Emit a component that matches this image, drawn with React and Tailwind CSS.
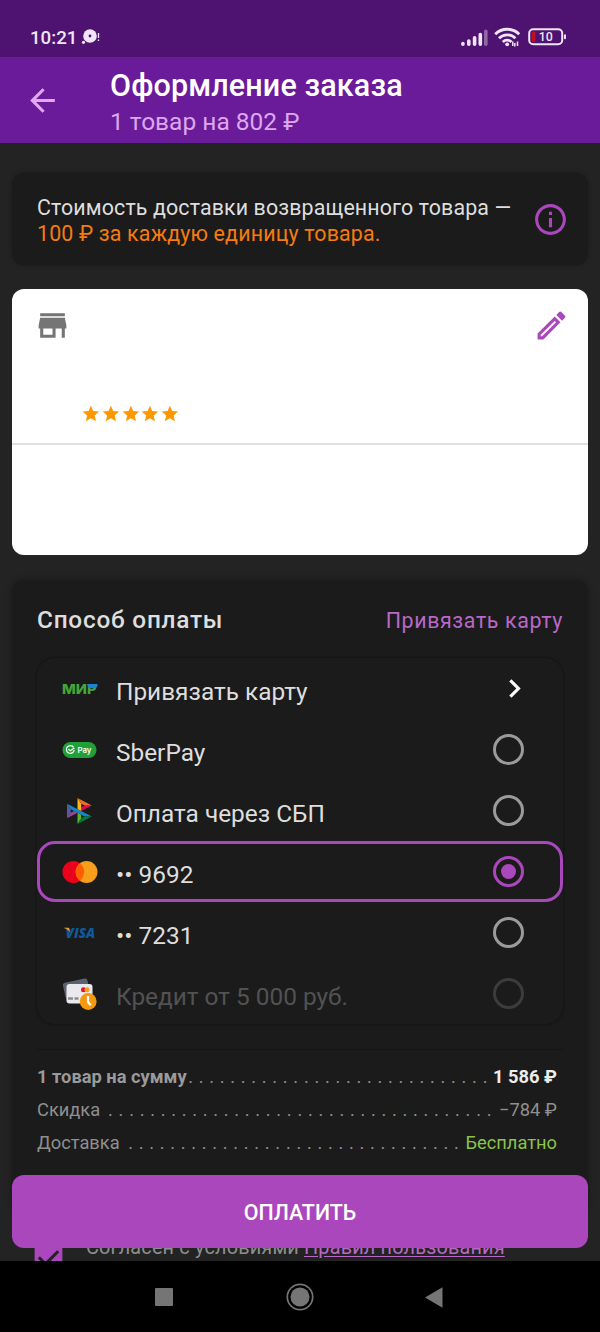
import { MdArrowBack, MdCheckBox, MdChevronRight, MdInfoOutline, MdOutlineModeEdit, MdStar, MdStore } from "react-icons/md";

const MirLogo = () => (
  <svg className="w-[36px] h-[22px]" viewBox="0 -5 36 22">
    <text x="0" y="10.6" textLength="34.5" lengthAdjust="spacingAndGlyphs" fontFamily="Inter, Roboto, sans-serif" fontWeight="800" fontSize="13" fill="#43a638">
      МИР
    </text>
    <path d="M25.2 1h10.4c.2 2.2-.8 3.8-2.6 4.2h-4.600c-1.700 0-2.800-1.800-3.200-4.200z" fill="#1c84cf" />
  </svg>
);

const SberPayLogo = () => (
  <svg className="w-[36px] h-[18px]" viewBox="0 0 36 18">
    <rect x="0.5" y="1" width="34" height="16" rx="8" fill="#21a038" />
    <path d="M11.6 6.3A3.9 3.9 0 1 0 12.2 9" fill="none" stroke="#fff" strokeWidth="1.2" />
    <path d="M6.3 8.2l2.1 1.5 4-2.7" fill="none" stroke="#fff" strokeWidth="1.2" />
    <text x="15.4" y="11.7" fontFamily="Inter, Roboto, sans-serif" fontWeight="600" fontSize="7.8" textLength="14" fill="#fff">
      Pay
    </text>
  </svg>
);

const SbpLogo = () => (
  <svg className="w-[25px] h-[26px] ml-[5px]" viewBox="0 0 98 120" preserveAspectRatio="none">
    <path d="M0 26.12l14.532 25.975v15.844L.017 93.863 0 26.12z" fill="#5b57a2" />
    <path d="M55.797 42.643l13.617-8.346 27.868-.026-41.485 25.414V42.643z" fill="#d90751" />
    <path d="M55.72 25.967l.077 34.39-14.566-8.95V0l14.49 25.967z" fill="#fab718" />
    <path d="M97.282 34.271l-27.869.026-13.693-8.33L41.231 0l56.05 34.271z" fill="#ed6f26" />
    <path d="M55.797 94.007V77.322l-14.566-8.78.008 51.458 14.558-25.993z" fill="#63b22f" />
    <path d="M69.38 85.737L14.531 52.095 0 26.12l97.223 59.583-27.844.034z" fill="#1487c9" />
    <path d="M41.24 120l14.556-25.993 13.583-8.27 27.843-.034L41.24 120z" fill="#017f36" />
    <path d="M.017 93.863l41.333-25.32-13.896-8.526-12.922 7.922L.017 93.863z" fill="#984995" />
  </svg>
);

const MastercardLogo = () => (
  <svg className="w-[36px] h-[22px]" viewBox="0 0 36 22">
    <circle cx="11.3" cy="11" r="10.9" fill="#eb001b" />
    <circle cx="24.6" cy="11" r="10.9" fill="#f79e1b" />
    <path d="M17.95 2.35a10.9 10.9 0 0 1 0 17.3a10.9 10.9 0 0 1 0-17.3z" fill="#ff5f00" />
  </svg>
);

const VisaLogo = () => (
  <svg className="w-[36px] h-[26px]" viewBox="0 -6 36 26">
    <text x="3.6" y="12" textLength="29.5" lengthAdjust="spacingAndGlyphs" fontFamily="Open Sans, sans-serif" fontStyle="italic" fontWeight="800" fontSize="14.4" fill="#0e5a9c">
      VISA
    </text>
    <path d="M1.8 1.7h4c1 0 1.5.4 1.7 1.3l.9 4.2C7.3 4.5 5 2.8 1.8 2z" fill="#dba33c" />
  </svg>
);

const CreditLogo = () => (
  <svg className="w-[36px] h-[32px]" viewBox="0 0 36 32">
    <rect x="2" y="2.5" width="25" height="17" rx="2.5" transform="rotate(-12 14 11)" fill="#5d6273" />
    <rect x="4.5" y="6" width="26" height="19.5" rx="3" fill="#e9e9ee" />
    <path d="M6 20.5h5M12.5 20.5h4" stroke="#8b8b90" strokeWidth="2.6" />
    <circle cx="21.5" cy="11.7" r="2.5" fill="#e0142c" />
    <circle cx="25" cy="11.7" r="2.5" fill="#f79e1b" />
    <circle cx="26.2" cy="23.5" r="8.4" fill="#f5990f" />
    <path d="M26 18v6l2.8 3.2" fill="none" stroke="#fff" strokeWidth="2.2" />
  </svg>
);

const methods = [
  { label: "Привязать карту", Logo: MirLogo, link: true },
  { label: "SberPay", Logo: SberPayLogo },
  { label: "Оплата через СБП", Logo: SbpLogo },
  { label: "•• 9692", Logo: MastercardLogo, selected: true },
  { label: "•• 7231", Logo: VisaLogo },
  { label: "Кредит от 5 000 руб.", Logo: CreditLogo, disabled: true },
];

const totals = [
  { label: "1 товар на сумму", value: "1 586 ₽", dots: 29, labelClass: "font-bold text-[#9a9a9a]", valueClass: "font-bold text-[#ececec] ml-[5px]" },
  { label: "Скидка", value: "−784 ₽", dots: 37, labelClass: "text-[#8f8f8f]", valueClass: "text-[#8f8f8f] ml-[7px]" },
  { label: "Доставка", value: "Бесплатно", dots: 32, labelClass: "text-[#8f8f8f]", valueClass: "text-[#8bc34a] ml-[6px]" },
];

function StatusBar() {
  return (
    <div className="h-[57px] shrink-0 bg-[#4e1370] flex items-center justify-between pl-[30px] pr-[33px] pt-[17px] text-[#f0e4f6]">
      <div className="flex items-center">
        <span className="pt-[2px] text-[18.7px] leading-[22px] font-medium">10:21</span>
        <svg className="w-[20px] h-[18px] ml-[4px]" viewBox="0 0 20 18">
          <circle cx="9" cy="8" r="6.8" fill="currentColor" />
          <circle cx="9" cy="8" r="1.4" fill="#4e1370" />
          <circle cx="2.5" cy="14.3" r="1.6" fill="currentColor" />
          <path d="M17.5 5v5M17.5 11.5v1.5" stroke="currentColor" strokeWidth="1.3" />
        </svg>
      </div>
      <div className="flex items-center">
        <svg className="w-[27px] h-[19px]" viewBox="0 0 27 19" stroke="currentColor" strokeWidth="3.6" strokeLinecap="round">
          <path d="M1.9 15.5v.7M7.8 13v3.2M13.6 9.8v6.4M19.3 6.5v9.7" />
          <path d="M24.8 3.3v12.9" opacity="0.4" />
        </svg>
        <svg className="w-[27px] h-[21px] ml-[6px]" viewBox="0 0 27 21" fill="none" stroke="currentColor" strokeWidth="2.8">
          <path d="M1.2 7.2a17 17 0 0 1 24 0M5 11.2a11.6 11.6 0 0 1 16.4 0M8.8 14.9a6.4 6.4 0 0 1 8.8 0" />
          <circle cx="13.2" cy="17.3" r="1.9" fill="currentColor" stroke="none" />
          <path d="M18.8 14.5v4.5M20.8 16v3.5M23.5 14.5v4.5" strokeWidth="1.5" />
        </svg>
        <svg className="w-[39px] h-[18px] ml-[7px]" viewBox="0 0 39 18">
          <rect x="1.2" y="1.2" width="33" height="15" rx="4" fill="none" stroke="currentColor" strokeWidth="2" />
          <rect x="3.7" y="3.7" width="3.8" height="10" rx="1" fill="#c30e1e" />
          <rect x="36" y="6.3" width="2" height="5" rx="1" fill="currentColor" />
          <text x="10.8" y="13.2" fontFamily="Roboto, sans-serif" fontWeight="500" fontSize="12.4" fill="currentColor">10</text>
        </svg>
      </div>
    </div>
  );
}

function Radio({ selected, disabled }) {
  if (selected) {
    return (
      <span className="w-[31px] h-[31px] rounded-full border-[3px] border-[#ab47bc] flex items-center justify-center">
        <span className="w-[15px] h-[15px] rounded-full bg-[#ab47bc]"></span>
      </span>
    );
  }
  return <span className={`w-[31px] h-[31px] rounded-full border-[3px] ${disabled ? "border-[#3c3c3c]" : "border-[#9b9b9b]"}`}></span>;
}

function App() {
  return (
    <div className="w-[600px] h-[1332px] flex flex-col overflow-hidden bg-[#232323] font-['Roboto',sans-serif]">
      <StatusBar />

      <header className="h-[86px] shrink-0 bg-[#6a1b9a] flex">
        <MdArrowBack className="w-[37px] h-[37px] ml-[24px] mt-[24.5px] shrink-0 text-[#e1a8f0]" />
        <div className="ml-[49px] pt-[12px]">
          <h1 className="text-[30.5px] leading-[34px] font-medium tracking-[0.13px] text-white">Оформление заказа</h1>
          <p className="mt-[5px] text-[24.5px] leading-[28px] text-[#dda6ee]">1 товар на 802 ₽</p>
        </div>
      </header>

      <main className="relative h-[1118px] shrink-0 overflow-hidden px-[12px] pt-[30px]">
        <section className="h-[92px] rounded-[12px] bg-[#1b1b1b] shadow-[0_0_4px_rgba(0,0,0,0.25)] flex justify-between pl-[25px] pr-[19px]">
          <p className="pt-[22px] text-[21.4px] leading-[25.6px] tracking-[0.12px] text-[#dedede] whitespace-nowrap">
            Стоимость доставки возвращенного товара —
            <br />
            <span className="text-[#f57c10] tracking-[0.16px]">100 ₽ за каждую единицу товара.</span>
          </p>
          <MdInfoOutline className="w-[37px] h-[37px] mt-[27.5px] shrink-0 text-[#ab47bc]" />
        </section>

        <section className="mt-[24px] h-[266px] rounded-[12px] bg-white flex flex-col">
          <div className="h-[156px] border-b-2 border-[#e0e0e0] pl-[21.5px] pr-[18px] pt-[18px]">
            <div className="flex justify-between">
              <MdStore className="w-[37px] h-[37px] text-[#757575]" />
              <MdOutlineModeEdit className="w-[37px] h-[37px] text-[#ab47bc]" />
            </div>
            <div className="flex ml-[47.5px] mt-[60px] text-[#ff9800]">
              {[1, 2, 3, 4, 5].map((n) => (
                <MdStar key={n} className="w-[19.8px] h-[19.8px]" />
              ))}
            </div>
          </div>
        </section>

        <section className="mt-[24.5px] h-[630px] rounded-[12px] bg-[#1b1b1b] shadow-[0_0_6px_rgba(0,0,0,0.3)] px-[25px] pt-[26px]">
          <div className="flex justify-between items-baseline h-[28px]">
            <h2 className="text-[24.4px] leading-[28px] font-medium text-[#dedede] tracking-[0.75px]">Способ оплаты</h2>
            <button className="text-[21.4px] leading-[28px] text-[#ba68c8] tracking-[0.62px]">Привязать карту</button>
          </div>

          <div className="mt-[24.5px] rounded-[18px] shadow-[0_0_3px_rgba(0,0,0,0.5)] bg-[#1b1b1b]">
            {methods.map(({ label, Logo, link, selected, disabled }) => (
              <div
                key={label}
                className={`h-[61px] flex items-center border-[3px] rounded-[18px] pl-[22px] pr-[36px] ${
                  selected ? "border-[#ab47bc]" : "border-transparent"
                }`}
              >
                <div className="w-[36px] mr-[18px]">
                  <Logo />
                </div>
                <span className={`flex-1 pt-[6px] text-[24.4px] leading-[28px] ${disabled ? "text-[#525252]" : "text-[#dedede]"}`}>{label}</span>
                {link ? <MdChevronRight className="w-[37px] h-[37px] -mr-[9px] text-white" /> : <Radio selected={selected} disabled={disabled} />}
              </div>
            ))}
          </div>

          <div className="mt-[25px] h-px bg-[#151515]"></div>

          <div className="mt-[9.5px] pr-[6px] text-[18.3px] leading-[33.4px] whitespace-nowrap">
            {totals.map(({ label, value, dots, labelClass, valueClass }) => (
              <div key={label} className="flex justify-between">
                <span className={labelClass}>{label}</span>
                <span className="flex-1 min-w-0 flex justify-end text-[#8f8f8f] tracking-[0.58px]">{Array(dots).fill(".").join(" ")}</span>
                <span className={valueClass}>{value}</span>
              </div>
            ))}
          </div>
        </section>

        {/* agreement line sits partly under the pay button */}
        <label className="absolute left-[30px] top-[1097px] flex items-start">
          <MdCheckBox className="w-[37px] h-[37px] text-[#ab47bc]" />
          <span className="ml-[19px] -mt-[3px] text-[19.85px] leading-[22px] tracking-[0.18px] text-[#8f8f8f] whitespace-nowrap">
            Согласен с условиями <a className="text-[#ba68c8] underline underline-offset-2">Правил пользования</a>
          </span>
        </label>

        <button className="absolute left-[12px] top-[1032px] w-[576px] h-[73px] rounded-[12px] bg-[#ab47bc] pt-[4px] text-[21.4px] font-medium text-white">
          ОПЛАТИТЬ
        </button>
      </main>

      <nav className="h-[71px] shrink-0 bg-black flex items-center pl-[155px] pt-[1px] text-[#757575]">
        <span className="w-[18px] h-[18px] rounded-[1px] bg-[#757575]"></span>
        <svg className="w-[28px] h-[28px] ml-[113px]" viewBox="0 0 28 28">
          <circle cx="14" cy="14" r="12.7" fill="none" stroke="currentColor" strokeWidth="1.7" />
          <circle cx="14" cy="14" r="9.5" fill="currentColor" />
        </svg>
        <svg className="w-[18px] h-[21px] ml-[111px]" viewBox="0 0 18 21">
          <path d="M17.5.3v20.4L0 10.5z" fill="currentColor" />
        </svg>
      </nav>
    </div>
  );
}

export default App;
